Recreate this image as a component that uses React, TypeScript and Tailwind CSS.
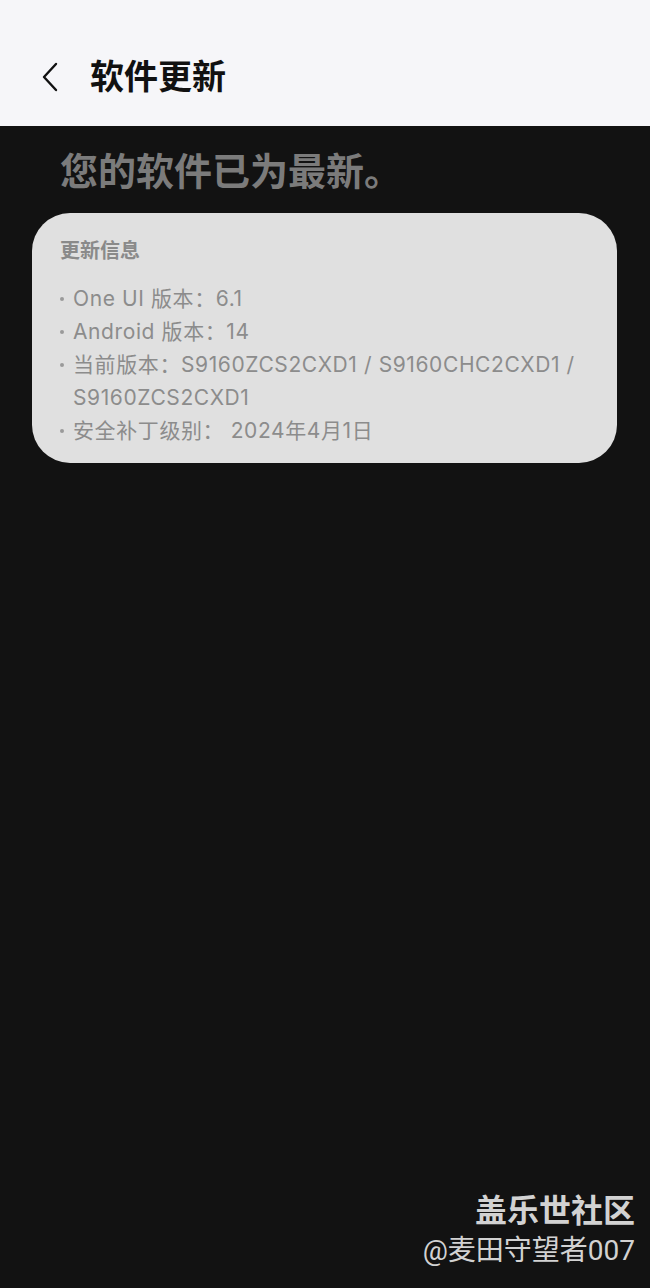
import React from "react";

const font = { fontFamily: '"Roboto", "Noto Sans CJK SC", sans-serif' };
const cardFont = { fontFamily: '"Inter", "Noto Sans CJK SC", sans-serif' };

export default function App() {
  const items: React.ReactNode[] = [
    "One UI 版本：6.1",
    "Android 版本：14",
    <>当前版本：S9160ZCS2CXD1 / S9160CHC2CXD1 /<br />S9160ZCS2CXD1</>,
    "安全补丁级别： 2024年4月1日",
  ];
  return (
    <div className="w-[650px] h-[1288px] bg-[#121212] flex flex-col overflow-hidden" style={font}>
      <div className="h-[126px] bg-[#f6f6f9] flex items-center pl-[40px] pt-[28px] shrink-0">
        <svg width="20" height="32" viewBox="0 0 20 32" className="mr-[30px]">
          <path d="M16 3 L4 16 L16 29" fill="none" stroke="#111" strokeWidth="2.4" strokeLinecap="round" strokeLinejoin="round" />
        </svg>
        <span className="text-[34px] font-bold text-[#111] leading-none">软件更新</span>
      </div>
      <div className="pl-[60px] mt-[23px] text-[38px] font-bold text-[#7b7b7b] leading-[46px]">您的软件已为最新。</div>
      <div className="mx-[32px] mt-[18px] w-[585px] rounded-[38px] bg-[#e0e0e0] pl-[28px] pr-[16px] pt-[24px] pb-[16px]" style={cardFont}>
        <div className="text-[20px] font-bold text-[#8a8a8a] leading-[28px]">更新信息</div>
        <div className="mt-[17px] flex flex-col">
          {items.map((t, i) => (
            <div key={i} className="flex text-[21px] text-[#8c8c8c] leading-[33px] tracking-[0.6px]">
              <span className="w-[13px] h-[33px] shrink-0 flex items-center">
                <span className="block w-[4px] h-[4px] rounded-full bg-[#9a9a9a]" />
              </span>
              <span>{t}</span>
            </div>
          ))}
        </div>
      </div>
      <div className="flex-1" />
      <div className="flex flex-col items-end pr-[15px] pb-[17px] text-[#d2d2d2]">
        <div className="text-[32px] font-bold leading-[40px]">盖乐世社区</div>
        <div className="text-[28px] leading-[40px]">@麦田守望者007</div>
      </div>
    </div>
  );
}
